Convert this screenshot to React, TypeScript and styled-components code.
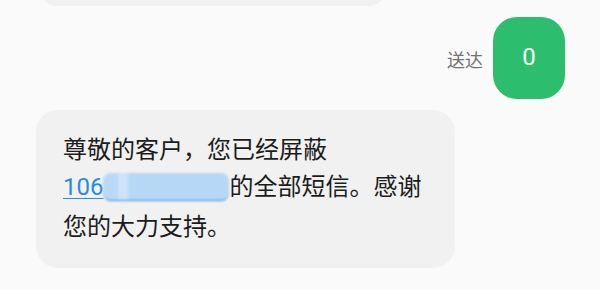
import { createGlobalStyle, styled } from "styled-components";

const GlobalStyle = createGlobalStyle`
	html, body {
		margin: 0;
		padding: 0;
		background: #fafafa;
	}
	body {
		font-family: "Noto Sans CJK SC", "Noto Sans", sans-serif;
	}
`

const Screen = styled.div`
	width: 600px;
	height: 290px;
	overflow: hidden;
	display: flex;
	flex-direction: column;
	background: #fafafa;
`

const PrevClip = styled.div`
	height: 6px;
	overflow: hidden;
	padding-left: 38px;
`

const PrevBubble = styled.div`
	width: 350px;
	height: 40px;
	margin-top: -34px;
	border-radius: 22px;
	background: #f1f1f1;
`

const OutRow = styled.div`
	display: flex;
	justify-content: flex-end;
	align-items: center;
	gap: 10px;
	padding-right: 35px;
	margin-top: 11px;
`

const Status = styled.span`
	font-size: 18px;
	color: #727272;
	line-height: 1;
	margin-top: 1px;
`

const OutBubble = styled.div`
	width: 72px;
	height: 82px;
	border-radius: 24px;
	background: #2dbd6e;
	color: #fff;
	display: flex;
	align-items: center;
	justify-content: center;
	font-family: Roboto, "Noto Sans", sans-serif;
	font-size: 24px;
	padding-bottom: 3px;
	box-sizing: border-box;
`

const InBubble = styled.div`
	margin: 11px 0 0 36px;
	width: 419px;
	height: 158px;
	box-sizing: border-box;
	padding: 19px 16px 0 27px;
	border-radius: 22px;
	background: #f1f1f1;
	color: #1c1c1c;
	font-size: 24px;
	line-height: 37px;
`

const Line = styled.div`
	white-space: nowrap;
`

const Link = styled.span`
	color: #2b8be0;
	text-decoration: underline;
	text-decoration-thickness: 1px;
	text-underline-offset: 3px;
	font-family: Roboto, "Noto Sans", sans-serif;
`

const Mask = styled.span`
	display: inline-block;
	width: 126px;
	height: 27px;
	vertical-align: -6px;
	border-radius: 8px;
	background: linear-gradient(90deg, #b9d9f6 0px, #b9d9f6 14px, #cde4f8 16px, #cde4f8 24px, #b6d7f5 26px);
	filter: blur(0.8px);
	border-bottom: 1px solid #2b8be0;
`

export default function App() {
	return (
		<>
			<GlobalStyle />
			<Screen>
				<PrevClip>
					<PrevBubble />
				</PrevClip>
				<OutRow>
					<Status>送达</Status>
					<OutBubble>0</OutBubble>
				</OutRow>
				<InBubble>
					<Line>尊敬的客户，您已经屏蔽</Line>
					<Line>
						<Link>106<Mask /></Link>的全部短信。感谢
					</Line>
					<Line>您的大力支持。</Line>
				</InBubble>
			</Screen>
		</>
	)
}
